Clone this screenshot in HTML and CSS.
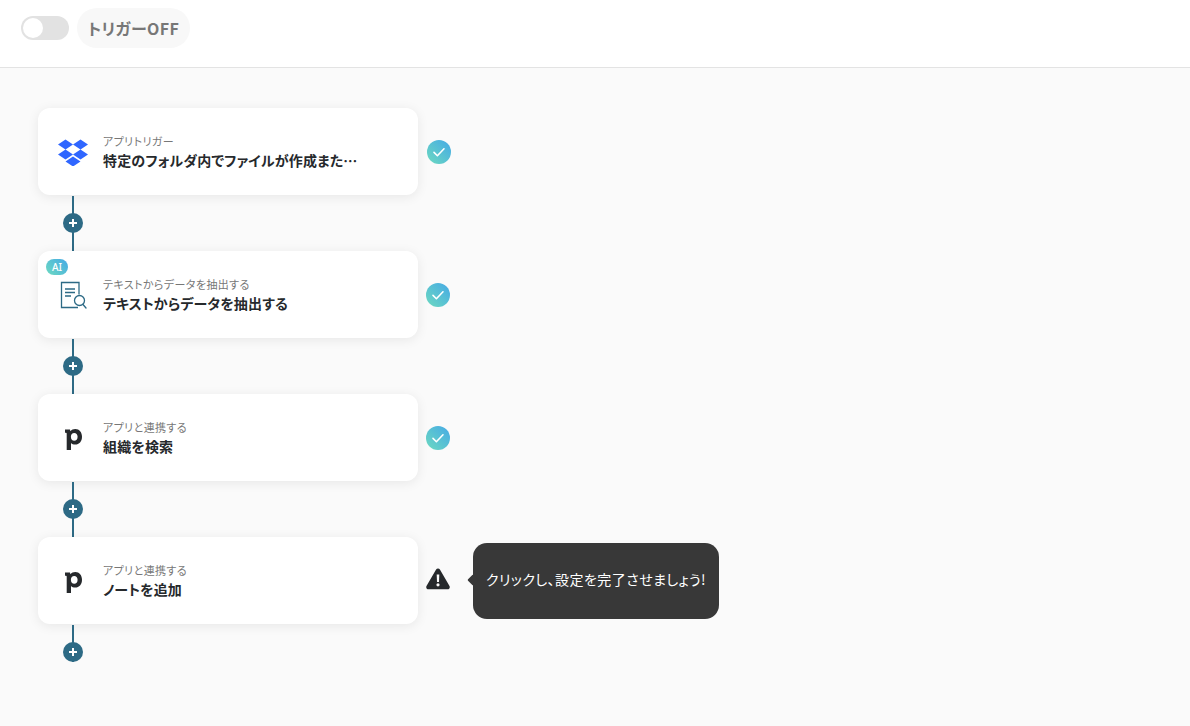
FILE: index.html
```html
<!DOCTYPE html>
<html lang="ja">
<head>
<meta charset="utf-8">
<title>フロー</title>
<link rel="stylesheet" href="styles.css">
</head>
<body>
<header class="topbar">
  <div class="toggle"><span class="knob"></span></div>
  <div class="trigger-pill">トリガーOFF</div>
</header>
<main class="flow">
  <svg class="defs" width="0" height="0" aria-hidden="true">
    <defs>
      <linearGradient id="grad" x1="0" y1="1" x2="1" y2="0">
        <stop offset="0" stop-color="#6ddac0"/>
        <stop offset="1" stop-color="#45a9e6"/>
      </linearGradient>
    </defs>
  </svg>

  <section class="row">
    <div class="card">
      <svg class="app-icon" viewBox="0 -1.500 30 28" width="30" height="28">
        <path fill="#2f66ff" d="M7.500 0 0 5l7.500 5L15 5zM22.500 0 15 5l7.500 5L30 5zM0 15l7.500 5 7.500-5-7.500-5zM22.500 10 15 15l7.500 5 7.500-5zM7.500 22l7.500 5 7.500-5-7.500-5z"/>
      </svg>
      <div class="labels">
        <div class="sub">アプリトリガー</div>
        <div class="title">特定のフォルダ内でファイルが作成また…</div>
      </div>
    </div>
    <svg class="status status-first" viewBox="0 0 24 24" width="24" height="24">
      <circle cx="12" cy="12" r="12" fill="url(#grad)"/>
      <path d="M7 12.400l3.400 3.300L17 8.800" fill="none" stroke="#fff" stroke-width="1.600" stroke-linecap="round" stroke-linejoin="round"/>
    </svg>
  </section>
  <div class="connector"><span class="plus"></span></div>

  <section class="row">
    <div class="card">
      <span class="ai-badge">AI</span>
      <svg class="app-icon" viewBox="0 0 30 28" width="30" height="28">
        <g fill="none" stroke="#2d6a85" stroke-width="1.300">
          <path d="M21 13.500V1.500H3.500v25H20M16 26.500H3.500"/>
          <path d="M7 8h10M7 11.500h10M7 15h6"/>
          <circle cx="21.500" cy="19.500" r="5"/>
          <path d="M25 23.500l3 3.500" stroke-linecap="round"/>
        </g>
      </svg>
      <div class="labels">
        <div class="sub">テキストからデータを抽出する</div>
        <div class="title">テキストからデータを抽出する</div>
      </div>
    </div>
    <svg class="status" viewBox="0 0 24 24" width="24" height="24">
      <circle cx="12" cy="12" r="12" fill="url(#grad)"/>
      <path d="M7 12.400l3.400 3.300L17 8.800" fill="none" stroke="#fff" stroke-width="1.600" stroke-linecap="round" stroke-linejoin="round"/>
    </svg>
  </section>
  <div class="connector"><span class="plus"></span></div>

  <section class="row">
    <div class="card">
      <svg class="app-icon" viewBox="0 0 30 28" width="30" height="28">
        <path fill="#26292c" fill-rule="evenodd" d="M7 5.500h5l.4 1.700C13.600 5.900 15.200 5 17.300 5c4 0 6.700 3.300 6.700 7.800 0 4.600-2.800 7.800-6.800 7.800-1.800 0-3.200-.7-4.200-1.700V26H8.700V9.400c0-.5-.3-.7-.7-.7H7zM16.200 8.900c-2 0-3.300 1.500-3.300 3.900 0 2.400 1.300 4 3.300 4s3.400-1.600 3.400-4c0-2.300-1.400-3.900-3.400-3.900z"/>
      </svg>
      <div class="labels">
        <div class="sub">アプリと連携する</div>
        <div class="title">組織を検索</div>
      </div>
    </div>
    <svg class="status" viewBox="0 0 24 24" width="24" height="24">
      <circle cx="12" cy="12" r="12" fill="url(#grad)"/>
      <path d="M7 12.400l3.400 3.300L17 8.800" fill="none" stroke="#fff" stroke-width="1.600" stroke-linecap="round" stroke-linejoin="round"/>
    </svg>
  </section>
  <div class="connector"><span class="plus"></span></div>

  <section class="row">
    <div class="card">
      <svg class="app-icon" viewBox="0 0 30 28" width="30" height="28">
        <path fill="#26292c" fill-rule="evenodd" d="M7 5.500h5l.4 1.700C13.600 5.900 15.200 5 17.300 5c4 0 6.700 3.300 6.700 7.800 0 4.600-2.800 7.800-6.800 7.800-1.800 0-3.200-.7-4.200-1.700V26H8.700V9.400c0-.5-.3-.7-.7-.7H7zM16.200 8.900c-2 0-3.300 1.500-3.300 3.900 0 2.400 1.300 4 3.300 4s3.400-1.600 3.400-4c0-2.300-1.400-3.900-3.400-3.900z"/>
      </svg>
      <div class="labels">
        <div class="sub">アプリと連携する</div>
        <div class="title">ノートを追加</div>
      </div>
    </div>
    <svg class="status status-warn" viewBox="0 0 24 24" width="24" height="24">
      <path fill="#26292c" fill-rule="evenodd" d="M12 1.500c.8 0 1.500.4 1.900 1.100l9.600 16.500c.8 1.400-.2 3.100-1.900 3.100H2.400C.7 22.200-.3 20.500.5 19.100l9.600-16.500c.4-.7 1.100-1.100 1.900-1.100zM10.700 7.500l.3 7.500h2l.3-7.500zM12 16.200a1.600 1.600 0 1 0 0 3.200 1.600 1.600 0 0 0 0-3.200z"/>
    </svg>
    <div class="tooltip">クリックし、設定を完了させましょう!</div>
  </section>
  <div class="connector connector-last"><span class="plus"></span></div>
</main>
</body>
</html>
```
FILE: styles.css
```css
* {
  box-sizing: border-box;
}

html,
body {
  margin: 0;
  height: 100%;
}

body {
  font-family: "Noto Sans CJK JP", "Noto Sans", sans-serif;
  font-feature-settings: "palt";
  background: #fafafa;
  color: #26292c;
  overflow: hidden;
}

.topbar {
  height: 68px;
  background: #fff;
  border-bottom: 1px solid #e3e3e3;
  display: flex;
  align-items: flex-start;
  padding: 8px 0 0 21px;
  gap: 8px;
}

.toggle {
  width: 48px;
  height: 24px;
  margin-top: 8px;
  border-radius: 12px;
  background: #e2e2e2;
  padding: 2px;
}

.knob {
  display: block;
  width: 20px;
  height: 20px;
  border-radius: 50%;
  background: #fff;
}

.trigger-pill {
  width: 113px;
  height: 40px;
  border-radius: 20px;
  background: #f8f8f8;
  color: #777;
  font-size: 16px;
  font-weight: 700;
  letter-spacing: 0.4px;
  line-height: 40px;
  text-align: center;
}

.flow {
  padding: 40px 0 0 38px;
  display: flex;
  flex-direction: column;
}

.defs {
  position: absolute;
}

.row {
  position: relative;
  display: flex;
  align-items: center;
  height: 87px;
}

.card {
  position: relative;
  width: 380px;
  height: 87px;
  flex: none;
  background: #fff;
  border-radius: 12px;
  box-shadow: 0 2px 12px rgba(0, 0, 0, 0.08);
  display: flex;
  align-items: center;
  padding-left: 20px;
  gap: 15px;
}

.app-icon {
  flex: none;
}

.labels {
  display: flex;
  flex-direction: column;
  margin-top: -1px;
}

.sub {
  font-size: 11px;
  line-height: 17px;
  letter-spacing: 0.4px;
  color: #777;
}

.title {
  font-size: 14px;
  font-weight: 700;
  letter-spacing: 0.15px;
  line-height: 20px;
  color: #26292c;
}

.ai-badge {
  position: absolute;
  left: 8px;
  top: 8px;
  width: 22px;
  height: 16px;
  border-radius: 8px;
  background: linear-gradient(45deg, #6ddac0, #45a9e6);
  color: #fff;
  font-family: "Noto Sans", sans-serif;
  font-size: 10px;
  font-weight: 500;
  line-height: 16px;
  text-align: center;
}

.status {
  flex: none;
  margin-left: 8px;
}

.status-first {
  margin-left: 9px;
}

.status-warn {
  margin-top: -3px;
}

.tooltip {
  position: absolute;
  left: 435px;
  top: 6px;
  width: 246px;
  height: 76px;
  border-radius: 14px;
  background: #383838;
  color: #fff;
  font-size: 14px;
  letter-spacing: 0.45px;
  line-height: 72px;
  text-align: center;
  white-space: nowrap;
}

.tooltip::before {
  content: "";
  position: absolute;
  left: -4px;
  top: 33px;
  width: 8px;
  height: 8px;
  background: #383838;
  border-radius: 1px;
  transform: rotate(45deg);
}

.connector {
  position: relative;
  width: 20px;
  height: 56px;
  margin-left: 25px;
  display: flex;
  align-items: center;
  justify-content: center;
}

.connector::before {
  content: "";
  position: absolute;
  left: 9px;
  top: 1px;
  bottom: 0;
  width: 2px;
  background: #2d6a85;
}

.connector-last {
  height: 38px;
  align-items: flex-end;
}

.plus {
  position: relative;
  width: 20px;
  height: 20px;
  border-radius: 50%;
  background: #2d6a85 linear-gradient(#fff, #fff) center / 8px 2px no-repeat;
}

.plus::after {
  content: "";
  position: absolute;
  left: 9px;
  top: 6px;
  width: 2px;
  height: 8px;
  background: #fff;
}
```
